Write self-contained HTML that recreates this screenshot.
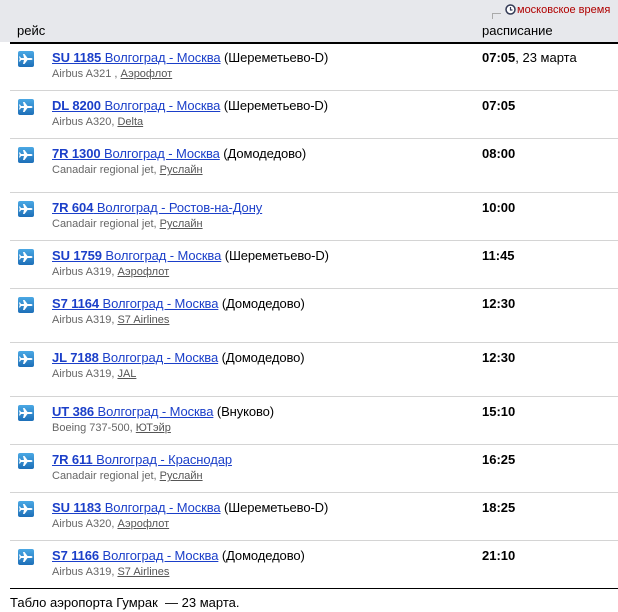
<!DOCTYPE html>
<html><head><meta charset="utf-8"><style>
body{margin:0;width:618px;height:612px;background:#fff;font-family:"Liberation Sans",Arial,sans-serif;position:relative;overflow:hidden}
.hd{position:absolute;left:0;top:0;width:618px;height:42px;background:#e7e8ec}
.hl{position:absolute;left:10px;right:0;top:42px;height:2px;background:#000}
.row{position:absolute;left:10px;right:0;border-top:1px solid #d4d4d4}
.ic{position:absolute;left:8px;top:8px;width:16px;height:16px;border-radius:2px;background:linear-gradient(#4aa8e4,#1d6fb8)}
.t{position:absolute;left:42px;top:7px;font-size:13px;white-space:nowrap;color:#000;letter-spacing:-0.1px}
.t a{color:#1b3fc9;text-decoration:underline}
.t b{font-weight:bold}
.s{position:absolute;left:42px;top:25px;font-size:11px;color:#666;white-space:nowrap}
.s u{color:#555}
.tm{position:absolute;left:472px;top:7px;font-size:13px;white-space:nowrap}
</style></head><body>
<div class="hd"></div>
<div style="position:absolute;left:17px;top:23px;font-size:13px">рейс</div>
<div style="position:absolute;left:482px;top:23px;font-size:13px">расписание</div>
<div style="position:absolute;left:492px;top:13px;width:8px;height:5px;border-left:1px solid #aaa;border-top:1px solid #aaa"></div>
<svg style="position:absolute;left:505px;top:4px" width="11" height="11" viewBox="0 0 11 11"><circle cx="5.5" cy="5.5" r="4.5" fill="#fff" stroke="#333a55" stroke-width="1.5"/><path d="M5.5 3v3h2" stroke="#333a55" fill="none" stroke-width="1.2"/></svg>
<div style="position:absolute;left:517px;top:4px;font-size:11px;color:#b00000">московское время</div>
<div class="hl"></div>
<svg width="0" height="0" style="position:absolute"><defs><symbol id="p" viewBox="0 0 16 16"><path d="M3 7h3L5 3h1.5l3 4H13c1 0 1.5.5 1.5 1s-.5 1-1.5 1H9.5l-3 4H5l1-4H3L2 10.5H1l.7-2.5L1 5.5h1z" fill="#fff"/></symbol></defs></svg>

<div class="row" style="top:43px;border:0"><div class="ic"><svg width="16" height="16"><use href="#p"/></svg></div><div class="t"><a><b>SU 1185</b> Волгоград - Москва</a> (Шереметьево-D)</div><div class="s">Airbus A321 , <u>Аэрофлот</u></div><div class="tm"><b>07:05</b>, 23 марта</div></div>
<div class="row" style="top:90px"><div class="ic"><svg width="16" height="16"><use href="#p"/></svg></div><div class="t"><a><b>DL 8200</b> Волгоград - Москва</a> (Шереметьево-D)</div><div class="s">Airbus A320, <u>Delta</u></div><div class="tm"><b>07:05</b></div></div>
<div class="row" style="top:138px"><div class="ic"><svg width="16" height="16"><use href="#p"/></svg></div><div class="t"><a><b>7R 1300</b> Волгоград - Москва</a> (Домодедово)</div><div class="s">Canadair regional jet, <u>Руслайн</u></div><div class="tm"><b>08:00</b></div></div>
<div class="row" style="top:192px"><div class="ic"><svg width="16" height="16"><use href="#p"/></svg></div><div class="t"><a><b>7R 604</b> Волгоград - Ростов-на-Дону</a></div><div class="s">Canadair regional jet, <u>Руслайн</u></div><div class="tm"><b>10:00</b></div></div>
<div class="row" style="top:240px"><div class="ic"><svg width="16" height="16"><use href="#p"/></svg></div><div class="t"><a><b>SU 1759</b> Волгоград - Москва</a> (Шереметьево-D)</div><div class="s">Airbus A319, <u>Аэрофлот</u></div><div class="tm"><b>11:45</b></div></div>
<div class="row" style="top:288px"><div class="ic"><svg width="16" height="16"><use href="#p"/></svg></div><div class="t"><a><b>S7 1164</b> Волгоград - Москва</a> (Домодедово)</div><div class="s">Airbus A319, <u>S7 Airlines</u></div><div class="tm"><b>12:30</b></div></div>
<div class="row" style="top:342px"><div class="ic"><svg width="16" height="16"><use href="#p"/></svg></div><div class="t"><a><b>JL 7188</b> Волгоград - Москва</a> (Домодедово)</div><div class="s">Airbus A319, <u>JAL</u></div><div class="tm"><b>12:30</b></div></div>
<div class="row" style="top:396px"><div class="ic"><svg width="16" height="16"><use href="#p"/></svg></div><div class="t"><a><b>UT 386</b> Волгоград - Москва</a> (Внуково)</div><div class="s">Boeing 737-500, <u>ЮТэйр</u></div><div class="tm"><b>15:10</b></div></div>
<div class="row" style="top:444px"><div class="ic"><svg width="16" height="16"><use href="#p"/></svg></div><div class="t"><a><b>7R 611</b> Волгоград - Краснодар</a></div><div class="s">Canadair regional jet, <u>Руслайн</u></div><div class="tm"><b>16:25</b></div></div>
<div class="row" style="top:492px"><div class="ic"><svg width="16" height="16"><use href="#p"/></svg></div><div class="t"><a><b>SU 1183</b> Волгоград - Москва</a> (Шереметьево-D)</div><div class="s">Airbus A320, <u>Аэрофлот</u></div><div class="tm"><b>18:25</b></div></div>
<div class="row" style="top:540px"><div class="ic"><svg width="16" height="16"><use href="#p"/></svg></div><div class="t"><a><b>S7 1166</b> Волгоград - Москва</a> (Домодедово)</div><div class="s">Airbus A319, <u>S7 Airlines</u></div><div class="tm"><b>21:10</b></div></div>
<div style="position:absolute;left:10px;right:0;top:588px;height:1px;background:#000"></div>
<div style="position:absolute;left:10px;top:595px;font-size:13px">Табло аэропорта Гумрак &nbsp;— 23 марта.</div>
</body></html>
